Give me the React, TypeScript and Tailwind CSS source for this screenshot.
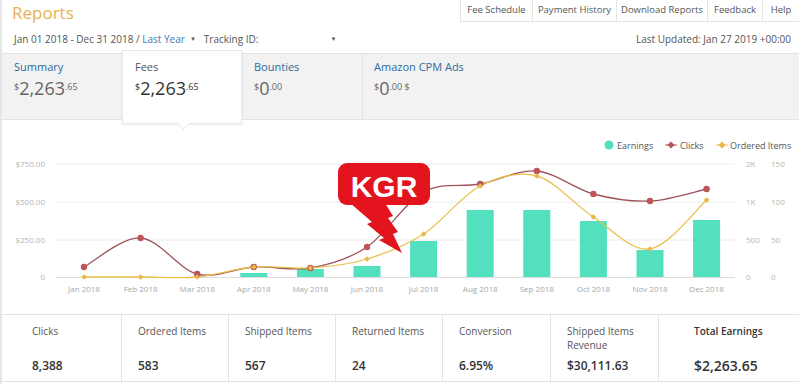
import React from "react";

type Pt = [number, number];

const months = ["Jan", "Feb", "Mar", "Apr", "May", "Jun", "Jul", "Aug", "Sep", "Oct", "Nov", "Dec"];
const xs = months.map((_, i) => 84 + i * 56.6);

// chart coords are page coords; svg starts at y=120
const clicksY = [267, 238, 274, 267, 268, 247, 192, 184, 171, 194, 201, 189];
const orderedY = [277, 277, 277, 267, 268, 259, 234, 186, 176, 217, 249, 200];
const barTop = [277, 277, 277, 273, 269, 266, 241, 210, 210, 221, 250, 220];

function smooth(pts: Pt[]) {
  let d = `M${pts[0][0]},${pts[0][1]}`;
  for (let i = 0; i < pts.length - 1; i++) {
    const p0 = pts[i - 1] || pts[i];
    const p1 = pts[i];
    const p2 = pts[i + 1];
    const p3 = pts[i + 2] || p2;
    const c1x = p1[0] + (p2[0] - p0[0]) / 6;
    const c1y = p1[1] + (p2[1] - p0[1]) / 6;
    const c2x = p2[0] - (p3[0] - p1[0]) / 6;
    const c2y = p2[1] - (p3[1] - p1[1]) / 6;
    d += ` C${c1x.toFixed(1)},${c1y.toFixed(1)} ${c2x.toFixed(1)},${c2y.toFixed(1)} ${p2[0].toFixed(1)},${p2[1]}`;
  }
  return d;
}

function Chart() {
  const clicks: Pt[] = xs.map((x, i) => [x, clicksY[i]]);
  const ordered: Pt[] = xs.map((x, i) => [x, orderedY[i]]);
  const grid = [164, 202, 240];
  return (
    <svg width={797} height={194} className="block" style={{ fontFamily: "'Open Sans', sans-serif" }}>
      <g transform="translate(-2,-120)">
        {/* legend */}
        <circle cx={609} cy={145} r={4.5} fill="#52e0bf" />
        <text x={617} y={148.5} fontSize={9} fill="#555">Earnings</text>
        <line x1={665} y1={145} x2={677} y2={145} stroke="#a0525a" strokeWidth={1} />
        <rect x={668.5} y={142.5} width={5} height={5} fill="#b8545a" transform="rotate(45 671 145)" />
        <text x={680} y={148.5} fontSize={9} fill="#555">Clicks</text>
        <line x1={716} y1={145} x2={728} y2={145} stroke="#e8c04a" strokeWidth={1} />
        <rect x={719.5} y={142.5} width={5} height={5} fill="#e8b84a" transform="rotate(45 722 145)" />
        <text x={730} y={148.5} fontSize={9} fill="#555">Ordered Items</text>

        {grid.map((y) => (
          <line key={y} x1={56} y1={y} x2={735} y2={y} stroke="#ececec" strokeWidth={1} />
        ))}
        <line x1={56} y1={277.5} x2={735} y2={277.5} stroke="#dcdcdc" strokeWidth={1} />

        {/* left axis */}
        {[["$750.00", 164], ["$500.00", 202], ["$250.00", 240], ["0", 277]].map(([t, y]) => (
          <text key={t as string} x={45} y={(y as number) + 3} fontSize={8} fill="#b5b5b5" textAnchor="end">{t}</text>
        ))}
        {/* right axes */}
        {[["2K", 164], ["1K", 202], ["500", 240], ["0", 277]].map(([t, y]) => (
          <text key={t as string} x={746} y={(y as number) + 3} fontSize={8} fill="#b5b5b5">{t}</text>
        ))}
        {[["150", 164], ["100", 202], ["50", 240], ["0", 277]].map(([t, y]) => (
          <text key={t as string} x={771} y={(y as number) + 3} fontSize={8} fill="#b5b5b5">{t}</text>
        ))}

        {/* bars */}
        {xs.map((x, i) =>
          barTop[i] < 277 ? (
            <rect key={i} x={x - 13.5} y={barTop[i]} width={27} height={277 - barTop[i]} fill="#52e0bf" />
          ) : null
        )}

        {/* x labels */}
        {xs.map((x, i) => (
          <text key={i} x={x} y={292} fontSize={8} fill="#a8a8a8" textAnchor="middle">{months[i]} 2018</text>
        ))}

        <path d={smooth(clicks)} fill="none" stroke="#a0525a" strokeWidth={1.3} />
        <path d={smooth(ordered)} fill="none" stroke="#e8c04a" strokeWidth={1.3} />
        {clicks.map(([x, y], i) => (
          <circle key={i} cx={x} cy={y} r={3.2} fill="#bd5558" />
        ))}
        {ordered.map(([x, y], i) => (
          <rect key={i} x={x - 2} y={y - 2} width={4} height={4} fill="#e8b84a" transform={`rotate(45 ${x} ${y})`} />
        ))}

        {/* KGR callout */}
        <rect x={338} y={163} width={92} height={42} rx={9} fill="#e3141e" />
        <polygon
          points="350,203 372,222 367,224 384,238 379,240 402,253 393,234 398,232 388,218 393,216 385,203"
          fill="#e3141e"
        />
        <text
          x={384}
          y={197}
          fontSize={30}
          fontWeight={700}
          fill="#fff"
          textAnchor="middle"
          style={{ fontFamily: "'Liberation Sans', Arial, sans-serif" }}
        >
          KGR
        </text>
      </g>
    </svg>
  );
}

function Money({ whole, cents, big = false }: { whole: string; cents: string; big?: boolean }) {
  return (
    <div className={`flex items-start ${big ? "text-[#333]" : "text-[#666]"}`}>
      <span className="mt-[2px] text-[9px]">$</span>
      <span className="text-[18px] leading-[20px]">{whole}</span>
      <span className="mt-[2px] text-[9px]">{cents}</span>
    </div>
  );
}

const navTabs = [
  { t: "Fee Schedule", w: "w-[72px]" },
  { t: "Payment History", w: "w-[84px]" },
  { t: "Download Reports", w: "w-[91px]" },
  { t: "Feedback", w: "w-[55px]" },
  { t: "Help", w: "w-[37px]" },
];

const stats = [
  { label: "Clicks", value: "8,388", w: "w-[120px]", pl: "pl-[30px]" },
  { label: "Ordered Items", value: "583", w: "w-[107px]", pl: "pl-[16px]" },
  { label: "Shipped Items", value: "567", w: "w-[107px]", pl: "pl-[16px]" },
  { label: "Returned Items", value: "24", w: "w-[107px]", pl: "pl-[16px]" },
  { label: "Conversion", value: "6.95%", w: "w-[108px]", pl: "pl-[16px]" },
  { label: "Shipped Items Revenue", value: "$30,111.63", w: "w-[108px]", pl: "pl-[16px]" },
];

export default function App() {
  return (
    <div
      className="relative h-[384px] w-[799px] overflow-hidden border-l-[2px] border-[#e6e6e6] bg-white text-[#555]"
      style={{ fontFamily: "'Open Sans', 'Noto Sans', sans-serif" }}
    >
      {/* top bar */}
      <div className="flex h-[22px] items-start justify-between">
        <div className="pl-[10px] pt-[2px] text-[17px] leading-[22px] text-[#e9b24f]">Reports</div>
        <div className="flex h-[22px] border-b border-[#e4e4e4] text-[9.5px] text-[#555]">
          {navTabs.map((n) => (
            <div key={n.t} className={`${n.w} flex items-center justify-center border-l border-[#e4e4e4]`}>
              {n.t}
            </div>
          ))}
        </div>
      </div>

      {/* filter row */}
      <div className="flex h-[31px] items-center justify-between pl-[12px] pr-[8px] pt-[3px] text-[10px] text-[#555]">
        <div className="flex items-center">
          <span>Jan 01 2018 - Dec 31 2018 /&nbsp;</span>
          <span className="text-[#3a7ab5]">Last Year</span>
          <span className="ml-[5px] text-[6px]">▼</span>
          <span className="ml-[8px]">Tracking ID:</span>
          <span className="ml-[72px] text-[6px]">▼</span>
        </div>
        <div>Last Updated: Jan 27 2019 +00:00</div>
      </div>

      {/* summary tabs */}
      <div className="flex h-[67px] border-y border-[#e2e2e2] bg-[#f2f2f2]">
        <div className="w-[120px] pl-[12px] pt-[5px]">
          <div className="text-[11px] text-[#2f6a9e]">Summary</div>
          <div className="mt-[2px]"><Money whole="2,263" cents=".65" /></div>
        </div>
        <div className="relative z-10 -mb-[5px] -mt-[4px] w-[120px] border border-[#eeeadb] bg-white pl-[12px] pt-[8px] shadow-[0_1px_2px_rgba(0,0,0,0.08)]">
          <div className="text-[11px] text-[#555]">Fees</div>
          <div className="mt-[2px]"><Money whole="2,263" cents=".65" big /></div>
          <div className="absolute -bottom-[5px] left-[56px] h-[9px] w-[9px] rotate-45 border-b border-r border-[#eeeadb] bg-white" />
        </div>
        <div className="w-[121px] border-r border-[#e2e2e2] pl-[12px] pt-[5px]">
          <div className="text-[11px] text-[#2f6a9e]">Bounties</div>
          <div className="mt-[2px]"><Money whole="0" cents=".00" /></div>
        </div>
        <div className="flex-1 pl-[11px] pt-[5px]">
          <div className="text-[11px] text-[#2f6a9e]">Amazon CPM Ads</div>
          <div className="mt-[2px] flex items-start text-[#666]">
            <span className="mt-[2px] text-[9px]">$</span>
            <span className="text-[18px] leading-[20px]">0</span>
            <span className="mt-[2px] text-[9px]">.00 $</span>
          </div>
        </div>
      </div>

      {/* chart */}
      <Chart />

      {/* stats */}
      <div className="flex h-[68px] border-y border-[#e2e2e2]">
        {stats.map((s) => (
          <div
            key={s.label}
            className={`${s.w} ${s.pl} flex shrink-0 flex-col justify-between border-r border-[#e2e2e2] pb-[7px] pt-[9px]`}
          >
            <div className="text-[10px] leading-[14px] text-[#555]">{s.label}</div>
            <div className="text-[12px] font-semibold leading-[16px] text-[#333]">{s.value}</div>
          </div>
        ))}
        <div className="flex flex-1 flex-col justify-between pb-[6px] pl-[35px] pt-[9px]">
          <div className="text-[10px] font-semibold leading-[14px] text-[#333]">Total Earnings</div>
          <div className="text-[14px] font-semibold leading-[18px] text-[#333]">$2,263.65</div>
        </div>
      </div>
    </div>
  );
}
